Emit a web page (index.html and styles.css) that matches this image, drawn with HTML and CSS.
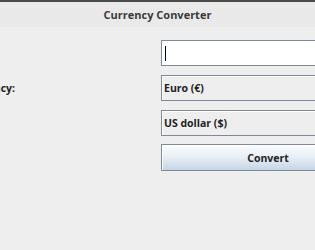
FILE: index.html
```html
<!DOCTYPE html>
<html lang="en">

<head>
    <meta charset="UTF-8">
    <meta name="viewport" content="width=device-width, initial-scale=1.0">
    <title>Currency Converter</title>
    <link rel="stylesheet" href="styles.css">
</head>

<body>
    <div class="window">
        <div class="titlebar">Currency Converter</div>
        <div class="form">
            <div class="label"></div>
            <div class="field text-field"><span class="caret"></span></div>

            <div class="label">Source currency:</div>
            <div class="field combo">Euro (€)</div>

            <div class="label"></div>
            <div class="field combo">US dollar ($)</div>

            <div class="label"></div>
            <button class="field convert">Convert</button>
        </div>
    </div>
</body>

</html>
```

FILE: styles.css
```css
body {
    margin: 0;
    background-color: #eeeeee;
    font-family: "Open Sans", "DejaVu Sans", sans-serif;
    overflow: hidden;
}

.window {
    width: 315px;
    height: 250px;
    border-top: 2px solid #4b4b4b;
    box-sizing: border-box;
}

.titlebar {
    height: 25px;
    background-color: #e9e9e9;
    color: #3a3a3a;
    font-size: 11px;
    font-weight: 700;
    display: flex;
    align-items: center;
    justify-content: center;
}

.form {
    display: grid;
    grid-template-columns: 161px 214px;
    grid-auto-rows: 26px;
    row-gap: 9px;
    padding-top: 13px;
}

.label {
    display: flex;
    align-items: center;
    justify-content: flex-end;
    white-space: nowrap;
    padding-right: 146px;
    font-size: 10.5px;
    font-weight: 700;
    color: #222222;
}

.field {
    box-sizing: border-box;
    border: 1px solid #7d8a98;
    display: flex;
    align-items: center;
    padding-left: 2px;
    font-family: inherit;
    font-size: 10.5px;
    font-weight: 700;
    color: #222222;
}

.text-field {
    background-color: #ffffff;
    box-shadow: inset 1px 1px 0 #ffffff;
}

.caret {
    width: 1px;
    height: 15px;
    margin-left: 1px;
    background-color: #000000;
}

.combo {
    background-color: #eeeeee;
    box-shadow: inset 1px 1px 0 #ffffff;
}

.convert {
    justify-content: center;
    padding: 0;
    margin-top: -1px;
    background: linear-gradient(#fbfcfd, #eaf0f6 45%, #c5d5e6);
    box-shadow: inset 1px 1px 0 #ffffff;
}
```
